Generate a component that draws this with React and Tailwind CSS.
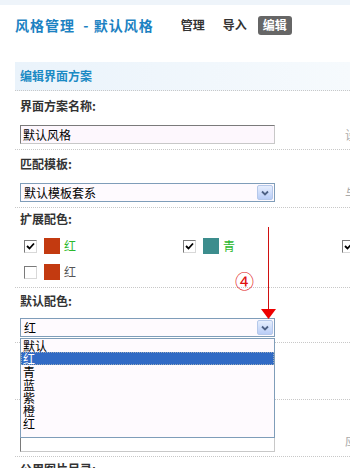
import React from "react";

const F = { fontFamily: '"Noto Sans CJK SC", "Noto Sans", sans-serif' };

function Check({ checked }) {
  return (
    <div className="w-[13px] h-[13px] border border-t-[#7a7a7a] border-l-[#7a7a7a] border-b-[#d8d8d8] border-r-[#d8d8d8] bg-white flex items-center justify-center shrink-0">
      {checked && (
        <svg width="9" height="9" viewBox="0 0 9 9">
          <path d="M1 4 L3.5 6.5 L8 1.5" stroke="#000" strokeWidth="1.8" fill="none" />
        </svg>
      )}
    </div>
  );
}

function DropBtn() {
  return (
    <div className="w-[16px] h-[15px] mr-[1px] rounded-[2px] border border-[#b5c8ea] bg-gradient-to-b from-[#e6eefd] to-[#b9cdf7] flex items-center justify-center shrink-0">
      <svg width="8" height="6" viewBox="0 0 8 6">
        <path d="M1 1.5 L4 4.5 L7 1.5" stroke="#4d6185" strokeWidth="1.8" fill="none" />
      </svg>
    </div>
  );
}

function Select({ value }) {
  return (
    <div className="w-[255px] shrink-0 h-[19px] border border-[#7f9db9] bg-[#fefafe] flex items-center justify-between pl-[3px] text-[12px] text-black">
      <span>{value}</span>
      <DropBtn />
    </div>
  );
}

export default function App() {
  const dotted = "border-b border-dotted border-[#c8c8c8]";
  const items = ["默认", "红", "青", "蓝", "紫", "橙", "红"];
  return (
    <div className="relative w-[350px] h-[468px] overflow-hidden bg-white" style={F}>
      <div className="h-[5px] bg-[#eef4fa]" />
      <div className="h-[40px] flex items-center pl-[15px]">
        <span className="text-[14px] font-bold text-[#1c82c2] whitespace-pre tracking-[1px]">风格管理  - 默认风格</span>
        <span className="ml-[27px] text-[12px] font-bold text-[#333]">管理</span>
        <span className="ml-[18px] text-[12px] font-bold text-[#333]">导入</span>
        <span className="ml-[11px] h-[19px] px-[5px] rounded-[3px] bg-[#666] text-white text-[12px] font-bold flex items-center">编辑</span>
      </div>
      <div className="pl-[15px] mt-[17px]">
        <div className={`h-[29px] flex items-center pl-[5px] bg-gradient-to-r from-[#eaf3fb] to-[#f6fafd] ${dotted}`}>
          <span className="text-[12px] font-bold text-[#1b8ac4]">编辑界面方案</span>
        </div>

        <div className={`pl-[5px] ${dotted}`}>
          <div className="h-[30px] flex items-center text-[12px] font-bold text-[#333]">界面方案名称:</div>
          <div className="mt-[4px] mb-[5px] flex items-center">
            <div className="w-[255px] shrink-0 h-[19px] border border-t-[#7a7a7a] border-l-[#7a7a7a] border-b-[#c8c8c8] border-r-[#c8c8c8] bg-[#fdf7fd] flex items-center pl-[2px] text-[12px] text-black">默认风格</div>
            <span className="ml-[70px] shrink-0 text-[12px] text-[#aaa] whitespace-nowrap">设置</span>
          </div>
        </div>

        <div className={`pl-[5px] ${dotted}`}>
          <div className="h-[28px] flex items-center text-[12px] font-bold text-[#333]">匹配模板:</div>
          <div className="mt-[5px] mb-[5px] flex items-center">
            <Select value="默认模板套系" />
            <span className="ml-[70px] shrink-0 text-[12px] text-[#aaa] whitespace-nowrap">与</span>
          </div>
        </div>

        <div className={`pl-[5px] ${dotted}`}>
          <div className="h-[22px] flex items-center text-[12px] font-bold text-[#333]">扩展配色:</div>
          <div className="mt-[3px] h-[26px] flex items-center text-[12px]">
            <div className="w-[163px] shrink-0 flex items-center pl-[4px]">
              <Check checked />
              <div className="ml-[7px] w-[16px] h-[16px] bg-[#c33a10]" />
              <span className="ml-[4px] text-[#2cb82c]">红</span>
            </div>
            <div className="w-[159px] shrink-0 flex items-center">
              <Check checked />
              <div className="ml-[7px] w-[16px] h-[16px] bg-[#3c8d8d]" />
              <span className="ml-[4px] text-[#2cb82c]">青</span>
            </div>
            <Check checked />
          </div>
          <div className="h-[26px] mb-[2px] flex items-center text-[12px] pl-[4px]">
            <Check />
            <div className="ml-[7px] w-[16px] h-[16px] bg-[#c33a10]" />
            <span className="ml-[4px] text-[#555]">红</span>
          </div>
        </div>

        <div className={`pl-[5px] ${dotted}`}>
          <div className="h-[26px] flex items-center text-[12px] font-bold text-[#333]">默认配色:</div>
          <div className="mt-[4px] mb-[5px]">
            <Select value="红" />
          </div>
        </div>

        <div className={`h-[57px] ${dotted}`} />

        <div className={`pl-[5px] h-[57px] flex items-end pb-[4px] ${dotted}`}>
          <div className="w-[255px] shrink-0 h-[15px] border-l border-b border-l-[#7a7a7a] border-b-[#c8c8c8] border-r border-r-[#c8c8c8]" />
          <span className="ml-[70px] shrink-0 mb-[2px] text-[12px] text-[#aaa] whitespace-nowrap">应</span>
        </div>

        <div className="pl-[5px] pt-[3px] text-[12px] font-bold text-[#333] whitespace-nowrap">公用图片目录:</div>
      </div>

      {/* dropdown list overlay */}
      <div className="absolute left-[20px] top-[338px] w-[255px] h-[100px] border border-[#7f9db9] bg-[#fefafe] text-[12px] text-black">
        {items.map((t, i) => (
          <div
            key={i}
            className={
              i === 1
                ? "h-[13px] overflow-hidden pl-[2px] bg-[#316ac5] text-white leading-[13px] outline outline-1 outline-dotted outline-[#9ab] -outline-offset-1"
                : "h-[13px] overflow-hidden pl-[2px] leading-[13px]"
            }
          >
            {t}
          </div>
        ))}
      </div>

      {/* annotation */}
      <div className="absolute left-[235px] top-[271px] text-[19px] leading-[20px] text-[#e01010]" style={F}>④</div>
      <div className="absolute left-[268px] top-[227px] w-[1px] h-[84px] bg-[#d01010]" />
      <svg className="absolute left-[261px] top-[309px]" width="15" height="10" viewBox="0 0 15 10">
        <polygon points="0,0 15,0 7.5,10" fill="#ee0000" />
      </svg>
    </div>
  );
}
